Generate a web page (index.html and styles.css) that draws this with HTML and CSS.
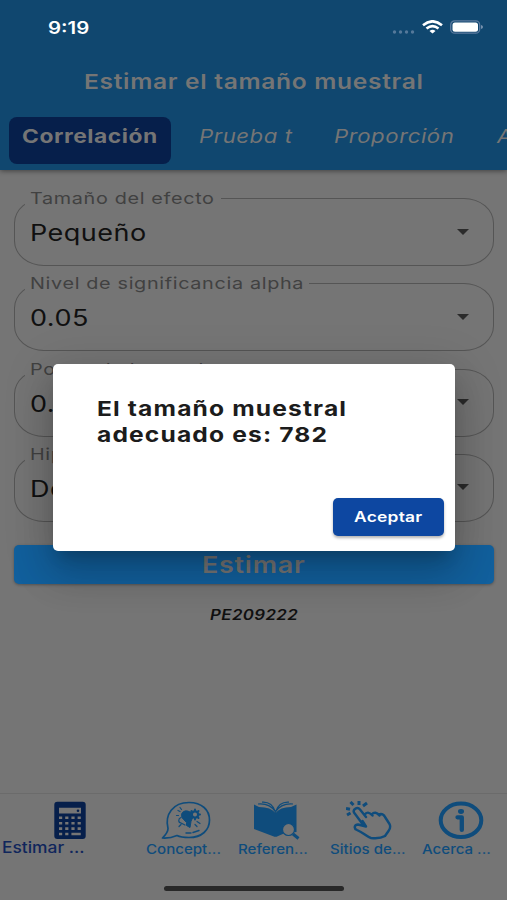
FILE: index.html
```html
<!DOCTYPE html>
<html lang="es">
<head>
<meta charset="utf-8">
<title>Estimar el tamaño muestral</title>
<link rel="stylesheet" href="styles.css">
</head>
<body>
<div class="screen">
  <header class="header">
    <div class="status">
      <span class="wide time">9:19</span>
      <span class="status-icons">
        <svg width="24" height="6" viewBox="0 0 24 6" fill="#55799a"><circle cx="2.5" cy="3" r="1.7"/><circle cx="8.5" cy="3" r="1.7"/><circle cx="14.5" cy="3" r="1.7"/><circle cx="20.5" cy="3" r="1.7"/></svg>
        <svg class="wifi" width="21" height="14" viewBox="0 0 21 14" fill="none" stroke="#fff" stroke-width="2.6"><path d="M1 5.2Q10.500-2.600 20 5.200"/><path d="M4.500 8.600Q10.500 3.800 16.500 8.600"/><path d="M10.500 13.400L7.500 10.900Q10.500 8.700 13.500 10.900Z" fill="#fff" stroke="none"/></svg>
        <svg class="battery" width="34" height="14" viewBox="0 0 34 14"><rect x=".7" y=".9" width="29" height="12.300" rx="4" fill="none" stroke="#5c7ba0" stroke-width="1.300"/><rect x="2.500" y="2.500" width="25.500" height="9.200" rx="2.500" fill="#fff"/><path d="M31 5q2 .5 2 2t-2 2z" fill="#7892ae"/></svg>
      </span>
    </div>
    <h1 class="wide title">Estimar el tamaño muestral</h1>
    <nav class="tabs">
      <div class="tab active"><span class="wide">Correlación</span></div>
      <div class="tab prueba"><span class="wide">Prueba t</span></div>
      <div class="tab proporcion"><span class="wide">Proporción</span></div>
      <div class="tab more"><span class="wide">A</span></div>
    </nav>
  </header>
  <main class="form">
    <div class="field"><div class="label l1"><span class="wide">Tamaño del efecto</span></div><span class="wide value">Pequeño</span><i class="arrow"></i></div>
    <div class="field"><div class="label l2"><span class="wide">Nivel de significancia alpha</span></div><span class="wide value">0.05</span><i class="arrow"></i></div>
    <div class="field"><div class="label l3"><span class="wide">Power de la prueba</span></div><span class="wide value">0.80</span><i class="arrow"></i></div>
    <div class="field"><div class="label l4"><span class="wide">Hipótesis</span></div><span class="wide value">Dos colas</span><i class="arrow"></i></div>
    <div class="estimate"><span class="wide">Estimar</span></div>
    <div class="code"><span class="wide">PE209222</span></div>
  </main>
  <nav class="bottom">
    <div class="item current">
      <svg width="32" height="38" viewBox="0 0 32 38"><rect x=".3" y=".2" width="31.400" height="37.300" rx="3" fill="#061f4b"/><path fill="#757575" d="M5 6.300H27V12H5zM5 15h3.200v2.600H5zm6.200 0h3.200v2.600h-3.200zm6.200 0h3.200v2.600h-3.200zm6.200 0h3.200v2.600h-3.200zM5 20.400h3.200V23H5zm6.200 0h3.200V23h-3.200zm6.200 0h3.200V23h-3.200zm6.200 0h3.200V23h-3.200zM5 25.800h3.200v2.600H5zm6.200 0h3.200v2.600h-3.200zm6.200 0h3.200v2.600h-3.200zm6.200 0h3.200v2.600h-3.200zM5 31.200h3.200v2.600H5zm6.200 0h3.200v2.600h-3.200zm6.200 0h9.400v2.600h-9.400z"/><circle cx="24" cy="9.200" r="1.300" fill="#061f4b"/></svg>
      <span class="wide">Estimar ...</span>
    </div>
    <div class="item i2">
      <svg width="50" height="38" viewBox="0 0 50 38" fill="none" stroke="#0f4c7c" stroke-width="1.700" stroke-linecap="round" stroke-linejoin="round"><path d="M1.500 36.500Q7 31 7 27C3.500 13 12 1 28 1c13 0 20.500 7.500 20.500 17.500S41 36 28 36c-5 0-9-.5-12-2Q9 37 1.500 36.500Z"/><path d="M25 31.500h5M32 31l6-2" stroke-width="1.400"/><path fill="#0f4c7c" stroke-width="1" d="M28 10c-4-2-8 1-7.500 4 0 3 3.500 5 5 7v3l3.500 2 1-6 2-5-4-2 3-2z"/><circle cx="34" cy="13" r="3.200" stroke-width="2.300"/><path stroke-width="2" d="M34 8v1.500m0 7V18m-5-5h1.500m7 0H39m-8.500-3.500 1 1m5 5 1 1m0-7-1 1m-5 5-1 1"/><path d="M20 16c-3 1-3 5 0 5.500l4 2M17 9l2 1m0-4 1.500 2M15.500 14h2M36 20l3 2m-5 1 2 2m-18 0 2-2" stroke-width="1.200"/></svg>
      <span class="wide">Concept...</span>
    </div>
    <div class="item i3">
      <svg width="48" height="39" viewBox="0 0 48 39"><path fill="#0f4c7c" d="M1 3.500L6 6Q18 6 22.500 12 27 6 38 6L43.500 3.500V31L32 32l-8.500 3.800h-2L1 28z"/><path fill="none" stroke="#0f4c7c" stroke-width="1.200" d="M5 3Q17 2 22.500 11 28 2 40 3M9 1.200Q19 .5 22.500 11 26 .5 36 1.200"/><circle cx="35.500" cy="28.500" r="6" fill="#757575" stroke="#0f4c7c" stroke-width="1.200"/><path d="M40 33l5.500 4.500" stroke="#0f4c7c" stroke-width="3"/></svg>
      <span class="wide">Referen...</span>
    </div>
    <div class="item i4">
      <svg width="46" height="39" viewBox="0 0 46 39" fill="none" stroke="#0f4c7c" stroke-width="2.400" stroke-linecap="round" stroke-linejoin="round"><path d="M16.500 23L8 11.500C6.500 8 11.500 5.500 14 8.500L20 16M18.500 14q3-5 8 .500m-1-1q4-4 8 1m-1-1q4.500-1.500 6.500 2.500l4.500 7c1 2 .500 5-1 7L39 35Q34 38 25 37c-4-1-7-5-14-8-4-2-2-5.500 1-5.500l8 2-3.500-5.500"/><path stroke-linecap="butt" stroke-width="3" d="M0 7.500l4 .8M4.500 1l3 3M13 0v4M21 2l-4 3M4.500 12L1 14"/></svg>
      <span class="wide">Sitios de...</span>
    </div>
    <div class="item i5">
      <svg width="46" height="38" viewBox="0 0 46 38"><ellipse cx="23" cy="18.800" rx="20.300" ry="16.700" fill="none" stroke="#0f4c7c" stroke-width="4"/><ellipse cx="23" cy="10" rx="3" ry="2.400" fill="#0f4c7c"/><path d="M19.500 15.800h4.300v12.600" fill="none" stroke="#0f4c7c" stroke-width="4.300" stroke-linecap="round" stroke-linejoin="round"/></svg>
      <span class="wide">Acerca ...</span>
    </div>
  </nav>
  <div class="home"></div>
  <section class="dialog" role="dialog">
    <h2 class="wide">El tamaño muestral<br>adecuado es: 782</h2>
    <button class="accept"><span class="wide">Aceptar</span></button>
  </section>
</div>
</body>
</html>
```
FILE: styles.css
```css
* { box-sizing: border-box; }
body { margin: 0; font-family: Inter, "Liberation Sans", sans-serif; }
.screen { position: relative; width: 507px; height: 900px; overflow: hidden; background: #757575; display: flex; flex-direction: column; }
/* Lettering is extended horizontally */
.wide { display: inline-block; white-space: nowrap; transform: scaleX(1.2); transform-origin: 0 50%; }
.header { height: 170px; flex: none; background: #10476f; box-shadow: 0 1px 5px rgba(0,0,0,.45); overflow: hidden; }
.status { height: 54px; display: flex; justify-content: space-between; padding: 17px 23px 0 48px; color: #fff; }
.time { font-size: 17px; font-weight: 600; line-height: 22px; height: 22px; }
.status-icons { display: flex; align-items: flex-start; padding-top: 3px; }
.status-icons svg:first-child { margin-top: 9px; margin-right: 6px; }
.wifi { margin-right: 7px; }
.title { display: block; margin: 14px 0 0 84px; width: 280px; font-size: 20.500px; line-height: 27px; font-weight: 600; letter-spacing: .55px; color: #757575; }
.tabs { display: flex; margin: 22px 0 0 9px; height: 47px; color: #757575; }
.tab { flex: none; padding-top: 6px; font-size: 18.500px; line-height: 27px; font-style: italic; letter-spacing: .45px; }
.active { width: 162px; padding-left: 13px; font-size: 19px; font-weight: 700; font-style: normal; background: #061f4b; border-radius: 8px; }
.prueba { width: 135px; margin-left: 28px; }
.proporcion { width: 163px; }
.form { padding: 28px 13px 0 14px; flex: 1; }
.field { position: relative; height: 68px; margin-bottom: 17.3px; border: 1.500px solid #555; border-radius: 30px / 25px; display: flex; align-items: center; justify-content: space-between; padding: 0 24px 0 15px; }
.label { position: absolute; top: -13px; left: 10px; height: 24px; padding-left: 5px; line-height: 24px; font-size: 16.500px; letter-spacing: .55px; color: #414141; background: #757575; }
.l1 { width: 196px; } .l2 { width: 284px; } .l3 { width: 190px; } .l4 { width: 120px; }
.value { font-size: 22.500px; line-height: 28px; margin-top: 2px; color: #101010; letter-spacing: .4px; }
.arrow { border: 6.500px solid transparent; border-top: 6px solid #2b2b2b; border-bottom: 0; margin-top: -1px; }
.estimate { height: 39px; margin-top: 23.500px; padding: 5px 0 0 188px; border-radius: 5px; background: #12609d; color: #757575; font-size: 22.500px; line-height: 29px; font-weight: 600; letter-spacing: .6px; box-shadow: 0 1px 3px rgba(0,0,0,.3); }
.code { margin: 21px 0 0 196px; font-size: 14px; line-height: 20px; font-weight: 600; font-style: italic; letter-spacing: .35px; color: #101010; }
.bottom { height: 93px; flex: none; border-top: 1px solid #6b6b6b; display: grid; grid-template-columns: 139px 92px 92px 92px 92px; padding-top: 7px; color: #0f4c7c; }
.item { display: flex; flex-direction: column; align-items: flex-start; font-size: 13px; font-weight: 500; line-height: 18px; }
.item .wide { margin: 0 0 0 7px; transform: scaleX(1.16); }
.item svg { flex: none; height: 39px; }
.current { font-size: 15.500px; color: #10265c; }
.current svg { margin-left: 54px; }
.item.current .wide { margin: -1px 0 0 2px; transform: scaleX(1.12); }
.i2 svg { margin-left: 22px; }
.i3 svg { margin-left: 22px; }
.i4 svg { margin-left: 23px; }
.i5 svg { margin-left: 23px; }
.home { flex: none; height: 5px; width: 180px; margin: 0 0 9px 164px; border-radius: 3px; background: #282828; }
.dialog { position: absolute; left: 53px; top: 364px; width: 402px; height: 187px; padding: 32px 11px 15px 44px; display: flex; flex-direction: column; justify-content: space-between; background: #fff; border-radius: 5px; box-shadow: 0 11px 15px -7px rgba(0,0,0,.2), 0 24px 38px 3px rgba(0,0,0,.14), 0 9px 46px 8px rgba(0,0,0,.12); }
.dialog h2 { margin: 0; width: 210px; font-size: 20.500px; line-height: 25.700px; font-weight: 650; letter-spacing: .95px; color: #1c1c1c; }
.accept { align-self: flex-end; width: 111px; height: 38px; border: 0; border-radius: 5px; padding: 0 0 2px 21px; text-align: left; background: #0d47a1; color: #fff; font: 600 14.500px Inter, sans-serif; letter-spacing: .2px; box-shadow: 0 2px 3px rgba(0,0,0,.3); }
```
